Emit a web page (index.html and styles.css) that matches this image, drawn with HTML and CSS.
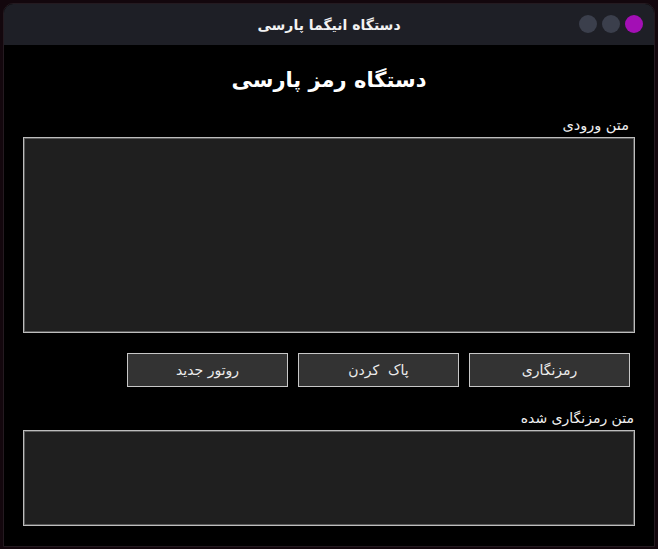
FILE: index.html
```html
<!DOCTYPE html>
<html lang="fa" dir="rtl">
<head>
<meta charset="utf-8">
<title>دستگاه انیگما پارسی</title>
<link rel="stylesheet" href="styles.css">
</head>
<body>
<div class="window">
  <div class="titlebar">
    <div class="title">دستگاه انیگما پارسی</div>
    <div class="controls">
      <span class="dot dot-active"></span>
      <span class="dot"></span>
      <span class="dot"></span>
    </div>
  </div>
  <div class="content">
    <h1 class="heading">دستگاه رمز پارسی</h1>
    <div class="label label-in">متن ورودی</div>
    <div class="textbox textbox-in"></div>
    <div class="buttons">
      <button class="btn">رمزنگاری</button>
      <button class="btn">پاک&nbsp; کردن</button>
      <button class="btn">روتور جدید</button>
    </div>
    <div class="label label-out">متن رمزنگاری شده</div>
    <div class="textbox textbox-out"></div>
  </div>
</div>
</body>
</html>
```

FILE: styles.css
```css
* { box-sizing: border-box; }
html, body {
  margin: 0;
  padding: 0;
  background: #13070d;
  width: 658px;
  height: 549px;
  overflow: hidden;
  font-family: "DejaVu Sans", "Noto Sans", sans-serif;
}
.window {
  position: relative;
  margin: 3px 3px 0 3px;
  width: 652px;
  height: 544px;
  border-radius: 10px 10px 0 0;
  background: #000;
  border: 1px solid #241a20;
  overflow: hidden;
  display: flex;
  flex-direction: column;
}
.titlebar {
  height: 41px;
  background: #1e1f26;
  display: flex;
  align-items: center;
  justify-content: center;
  position: relative;
  flex-shrink: 0;
}
.title {
  color: #f2f2f2;
  font-weight: bold;
  font-size: 14px;
}
.controls {
  position: absolute;
  right: 11px;
  top: 11px;
  display: flex;
  gap: 5px;
  direction: rtl;
}
.dot {
  width: 18px;
  height: 18px;
  border-radius: 50%;
  background: #3b3f4c;
  display: block;
}
.dot-active { background: #a30fb5; }
.content {
  flex: 1;
  padding: 0 19px 0 19px;
  display: flex;
  flex-direction: column;
}
.heading {
  margin: 22px 0 0 0;
  text-align: center;
  color: #fff;
  font-size: 21px;
  font-weight: bold;
  line-height: 26px;
}
.label {
  color: #f0f0f0;
  font-size: 14px;
  line-height: 18px;
}
.label-in { margin-top: 23px; padding-right: 6px; font-size: 14.5px; }
.label-out { margin-top: 22px; padding-right: 1px; }
.textbox {
  background: #1f1f1f;
  border: 1px solid #bdbdbd;
  box-shadow: inset 0 0 0 1px #5a5a5a;
  width: 612px;
}
.textbox-in { height: 196px; margin-top: 3px; }
.textbox-out { height: 96px; margin-top: 3px; }
.buttons {
  margin-top: 20px;
  display: flex;
  gap: 10px;
  padding-right: 5px;
}
.btn {
  width: 161px;
  height: 34px;
  background: #333333;
  border: 1px solid #c8c8c8;
  color: #ececec;
  font-family: "DejaVu Sans", "Noto Sans", sans-serif;
  font-size: 14px;
  padding: 0;
  margin: 0;
}
```
